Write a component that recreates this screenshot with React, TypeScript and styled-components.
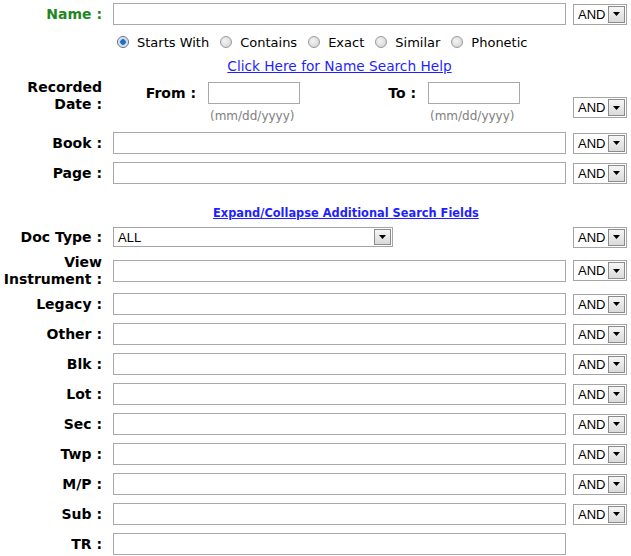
import React, { FC } from 'react';
import styled, { createGlobalStyle } from 'styled-components';

const GlobalStyle = createGlobalStyle`
  html, body {
    margin: 0;
    padding: 0;
    background: #fff;
  }
  body {
    font-family: "DejaVu Sans", Verdana, sans-serif;
    font-size: 13px;
    color: #000;
  }
`;

const Form = styled.div`
  width: 631px;
  display: flex;
  flex-direction: column;
`;

const Row = styled.div<{ $h: number; $top?: boolean }>`
  display: grid;
  grid-template-columns: 113px 460px 58px;
  align-items: ${(p) => (p.$top ? 'start' : 'center')};
  height: ${(p) => p.$h}px;
`;

const Label = styled.div<{ $green?: boolean; $mt?: number }>`
  padding-right: 11px;
  margin-top: ${(p) => p.$mt ?? 0}px;
  text-align: right;
  font-weight: bold;
  font-size: 14px;
  line-height: 17px;
  white-space: nowrap;
  color: ${(p) => (p.$green ? '#1e871e' : '#000')};
`;

const TextBox = styled.input<{ $w?: number }>`
  box-sizing: border-box;
  width: ${(p) => p.$w ?? 453}px;
  height: 22px;
  margin: 0;
  border: 1px solid #a9a9a9;
  padding: 0 3px;
  font: inherit;
  outline: none;
  background: #fff;
`;

const Combo = styled.div<{ $w: number; $h: number; $mt?: number }>`
  box-sizing: border-box;
  width: ${(p) => p.$w}px;
  height: ${(p) => p.$h}px;
  margin-top: ${(p) => p.$mt ?? 0}px;
  border: 1px solid #a5a5a5;
  display: flex;
  align-items: stretch;
  background: #fff;
  font-family: "Liberation Sans", Arial, sans-serif;
  font-size: 13px;
`;

const ComboText = styled.span`
  flex: 1;
  display: flex;
  align-items: center;
  padding-left: 4px;
`;

const ComboButton = styled.span`
  box-sizing: border-box;
  width: 17px;
  margin: 1px;
  border: 1px solid #8c8c8c;
  background: linear-gradient(#f6f6f6, #dadada);
  display: flex;
  align-items: center;
  justify-content: center;
`;

const DropDown: FC<{ value: string; w?: number; h?: number; mt?: number }> = ({
  value,
  w = 54,
  h = 21,
  mt,
}) => (
  <Combo $w={w} $h={h} $mt={mt}>
    <ComboText>{value}</ComboText>
    <ComboButton>
      <svg width="7" height="4" viewBox="0 0 7 4">
        <path d="M0 0h7L3.5 4z" fill="#000" />
      </svg>
    </ComboButton>
  </Combo>
);

const RadioGroup = styled.div`
  display: flex;
  align-items: center;
  padding-left: 4px;
  white-space: nowrap;
`;

const RadioItem = styled.label`
  display: flex;
  align-items: center;
  margin-right: 11px;
`;

const RadioDot = styled.span<{ $checked?: boolean }>`
  box-sizing: border-box;
  width: 12px;
  height: 12px;
  margin-right: 8px;
  border-radius: 50%;
  border: 1px solid ${(p) => (p.$checked ? '#5a6f86' : '#9a9a9a')};
  background: ${(p) =>
    p.$checked
      ? 'radial-gradient(circle, #1f6fc4 0 2.5px, #bfcfe0 3px, #eef2f6 5px)'
      : 'radial-gradient(circle at 40% 40%, #f4f4f4, #cfcfcf)'};
`;

const LinkCell = styled.div<{ $center?: boolean; $ml?: number }>`
  text-align: ${(p) => (p.$center ? 'center' : 'left')};
  width: ${(p) => (p.$center ? '453px' : 'auto')};
  padding-left: ${(p) => p.$ml ?? 0}px;
  white-space: nowrap;
`;

const HelpLink = styled.a<{ $bold?: boolean }>`
  color: #1f1fff;
  text-decoration: underline;
  font-weight: ${(p) => (p.$bold ? 'bold' : 'normal')};
  font-size: ${(p) => (p.$bold ? '11.4px' : '13.7px')};
  cursor: pointer;
`;

const DateFields = styled.div`
  display: flex;
  align-items: flex-start;
  margin-top: 6px;
`;

const DateLabel = styled.div<{ $w: number }>`
  box-sizing: border-box;
  width: ${(p) => p.$w}px;
  padding-right: 12px;
  text-align: right;
  font-weight: bold;
  font-size: 14px;
  line-height: 22px;
`;

const DateColumn = styled.div`
  display: flex;
  flex-direction: column;
`;

const Hint = styled.span`
  margin-top: 5px;
  padding-left: 2px;
  font-size: 12px;
  line-height: 15px;
  color: #808080;
`;

const Spacer = styled.div<{ $h: number }>`
  height: ${(p) => p.$h}px;
`;

const extraFields = ['Legacy', 'Other', 'Blk', 'Lot', 'Sec', 'Twp', 'M/P', 'Sub'];

const App: FC = () => {
  return (
    <>
      <GlobalStyle />
      <Form>
        <Row $h={28}>
          <Label $green>Name :</Label>
          <TextBox />
          <DropDown value="AND" />
        </Row>
        <Row $h={28}>
          <div />
          <RadioGroup>
            <RadioItem><RadioDot $checked />Starts With</RadioItem>
            <RadioItem><RadioDot />Contains</RadioItem>
            <RadioItem><RadioDot />Exact</RadioItem>
            <RadioItem><RadioDot />Similar</RadioItem>
            <RadioItem><RadioDot />Phonetic</RadioItem>
          </RadioGroup>
        </Row>
        <Row $h={20}>
          <div />
          <LinkCell $center>
            <HelpLink>Click Here for Name Search Help</HelpLink>
          </LinkCell>
        </Row>
        <Row $h={52} $top>
          <Label $mt={3}>
            Recorded
            <br />
            Date :
          </Label>
          <DateFields>
            <DateLabel $w={95}>From :</DateLabel>
            <DateColumn>
              <TextBox $w={92} />
              <Hint>(mm/dd/yyyy)</Hint>
            </DateColumn>
            <DateLabel $w={128}>To :</DateLabel>
            <DateColumn>
              <TextBox $w={92} />
              <Hint>(mm/dd/yyyy)</Hint>
            </DateColumn>
          </DateFields>
          <DropDown value="AND" mt={21} />
        </Row>
        <Row $h={30}>
          <Label>Book :</Label>
          <TextBox />
          <DropDown value="AND" />
        </Row>
        <Row $h={30}>
          <Label>Page :</Label>
          <TextBox />
          <DropDown value="AND" />
        </Row>
        <Spacer $h={14} />
        <Row $h={20}>
          <div />
          <LinkCell $ml={100}>
            <HelpLink $bold>Expand/Collapse Additional Search Fields</HelpLink>
          </LinkCell>
        </Row>
        <Row $h={30}>
          <Label>Doc Type :</Label>
          <DropDown value="ALL" w={280} h={20} />
          <DropDown value="AND" />
        </Row>
        <Row $h={37}>
          <Label>
            View
            <br />
            Instrument :
          </Label>
          <TextBox />
          <DropDown value="AND" />
        </Row>
        {extraFields.map((name) => (
          <Row $h={30} key={name}>
            <Label>{name} :</Label>
            <TextBox />
            <DropDown value="AND" />
          </Row>
        ))}
        <Row $h={30}>
          <Label>TR :</Label>
          <TextBox />
        </Row>
      </Form>
    </>
  );
};

export default App;
